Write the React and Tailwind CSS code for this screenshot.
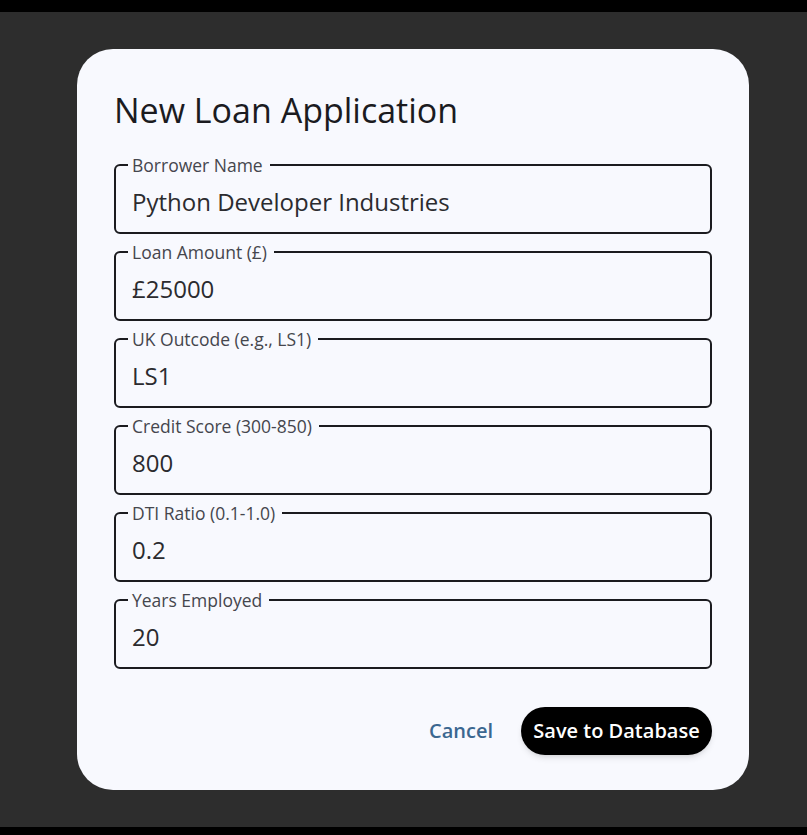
import React, { useState } from 'react';

const fields = [
  { id: 'name', label: 'Borrower Name', value: 'Python Developer Industries' },
  { id: 'amount', label: 'Loan Amount (£)', value: '£25000' },
  { id: 'outcode', label: 'UK Outcode (e.g., LS1)', value: 'LS1' },
  { id: 'score', label: 'Credit Score (300-850)', value: '800' },
  { id: 'dti', label: 'DTI Ratio (0.1-1.0)', value: '0.2' },
  { id: 'years', label: 'Years Employed', value: '20' },
];

const Field = ({ label, value, onChange }) => (
  <div className="relative h-[70px] border-2 border-[#1b1b1f] rounded-[6px]">
    <span className="absolute left-[12px] -top-[9px] pl-[4px] pr-[7px] bg-[#f8f9fe] text-[17.5px] leading-[16px] text-[#45464d]">
      {label}
    </span>
    <input
      type="text"
      value={value}
      onChange={onChange}
      className="w-full h-full bg-transparent pl-[16px] pt-[5px] text-[24px] text-[#2b2b2f] outline-none"
    />
  </div>
);

const App = () => {
  const [form, setForm] = useState(
    Object.fromEntries(fields.map((f) => [f.id, f.value]))
  );

  const handleChange = (id) => (e) => {
    setForm({ ...form, [id]: e.target.value });
  };

  return (
    <div
      className="h-[835px] bg-black pt-[12px] pb-[8px] flex flex-col"
      style={{ fontFamily: '"Open Sans", "Noto Sans", sans-serif' }}
    >
      <div className="flex-1 bg-[#2d2d2d] pt-[37px] pl-[77px]">
        <div className="w-[672px] h-[741px] bg-[#f8f9fe] rounded-[36px] px-[37px] pt-[41px] pb-[35px] flex flex-col">
          <h1 className="text-[34px] leading-[40px] text-[#1b1b1f]">New Loan Application</h1>

          <form className="mt-[34px] flex flex-col gap-[17px]">
            {fields.map((f) => (
              <Field
                key={f.id}
                label={f.label}
                value={form[f.id]}
                onChange={handleChange(f.id)}
              />
            ))}
          </form>

          <div className="mt-[38px] flex justify-end items-center gap-[16px]">
            <button className="h-[48px] px-[12px] text-[20px] font-semibold text-[#3b6790]">
              Cancel
            </button>
            <button className="h-[48px] w-[191px] rounded-full bg-black text-white text-[20px] font-semibold shadow-md">
              Save to Database
            </button>
          </div>
        </div>
      </div>
    </div>
  );
};

export default App;
